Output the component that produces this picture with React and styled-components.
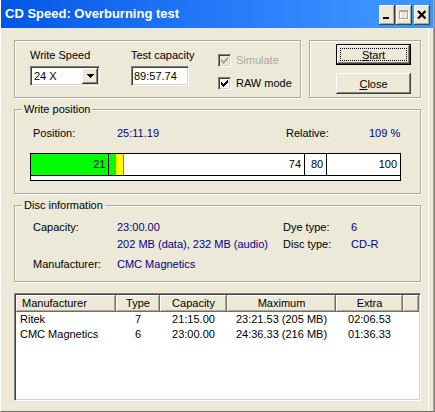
import React from 'react';
import styled, { createGlobalStyle, css } from 'styled-components';

const Global = createGlobalStyle`
  html, body { margin: 0; padding: 0; background: #ECE9D8; }
  body { font-family: "Liberation Sans", Arial, sans-serif; font-size: 11px; }
  *, *::before, *::after { box-sizing: border-box; }
`;

const Window = styled.div`
  width: 435px;
  height: 412px;
  background: #ECE9D8;
  border-left: 1px solid #fff;
  border-right: 1px solid #8a887e;
  border-bottom: 1px solid #716F64;
  box-shadow: inset -1px 0 0 #ACA899, inset -5px 0 0 #ECE9D8, inset -6px 0 0 #fff;
  display: flex;
  flex-direction: column;
  overflow: hidden;
  font-family: "Liberation Sans", Arial, sans-serif;
  font-size: 11px;
  color: #000;
`;

const TitleBar = styled.div`
  height: 28px;
  flex: none;
  display: flex;
  align-items: flex-start;
  margin-right: 1px;
  padding: 0 3px 0 4px;
  background: linear-gradient(to right, #0055E5 0%, #1569F0 25%, #2A80FB 60%, #3A92FF 85%, #3D96FF 100%);
`;

const TitleText = styled.div`
  flex: 1;
  color: #fff;
  font-weight: bold;
  font-size: 13px;
  line-height: 28px;
  white-space: nowrap;
`;

const CaptionButtons = styled.div`
  display: flex;
  margin-top: 5px;
`;

const CaptionButton = styled.div`
  width: 16px;
  height: 20px;
  margin-left: ${p => p.$gap || 0}px;
  background: #ECE9D8;
  box-shadow: inset -1px -1px #404040, inset 1px 1px #fff, inset -2px -2px #ACA899;
  display: flex;
  align-items: center;
  justify-content: center;
`;

const Body = styled.div`
  flex: 1;
  display: flex;
  flex-direction: column;
  padding: 12px 13px 0 13px;
`;

const TopRow = styled.div`
  display: flex;
  gap: 8px;
  height: 58px;
  flex: none;
`;

const Group = styled.div`
  position: relative;
  flex: none;
  height: ${p => p.$height}px;
  ${p => (p.$width ? `width: ${p.$width}px;` : '')}
  border: 1px solid #ACA899;
  box-shadow: 1px 1px 0 #fff, inset 1px 1px 0 #fff;
  margin-top: ${p => p.$mt || 0}px;
`;

const GroupTitle = styled.span`
  position: absolute;
  top: -7px;
  left: 7px;
  padding: 0 2px;
  line-height: 13px;
  background: #ECE9D8;
`;

const SettingsBox = styled(Group)`
  display: flex;
  padding: 8px 0 0 15px;
`;

const FieldColumn = styled.div`
  width: ${p => p.$width}px;
  display: flex;
  flex-direction: column;
  gap: 4px;
`;

const Label = styled.div`
  line-height: 13px;
  white-space: nowrap;
  color: ${p => (p.$disabled ? '#ACA899' : '#000')};
`;

const sunken = css`
  border: 1px solid;
  border-color: #808080 #fff #fff #808080;
  box-shadow: inset 1px 1px #404040, inset -1px -1px #D4D0C8;
`;

const Combo = styled.div`
  ${sunken};
  width: 70px;
  height: 20px;
  background: #fff;
  display: flex;
  align-items: center;
  padding: 1px 1px 1px 3px;
`;

const ComboText = styled.span`
  flex: 1;
  line-height: 16px;
`;

const DropButton = styled.div`
  width: 16px;
  height: 16px;
  background: #ECE9D8;
  box-shadow: inset -1px -1px #404040, inset 1px 1px #fff, inset -2px -2px #808080, inset 2px 2px #ECE9D8;
  display: flex;
  align-items: center;
  justify-content: center;
`;

const TextBox = styled.div`
  ${sunken};
  width: 58px;
  height: 20px;
  background: #fff;
  padding: 1px 2px;
  line-height: 16px;
`;

const CheckColumn = styled.div`
  display: flex;
  flex-direction: column;
  gap: 10px;
  margin-top: 5px;
`;

const CheckRow = styled.div`
  display: flex;
  align-items: center;
  gap: 5px;
`;

const CheckBox = styled.span`
  ${sunken};
  width: 13px;
  height: 13px;
  flex: none;
  background: ${p => (p.$disabled ? '#ECE9D8' : '#fff')};
  display: flex;
  align-items: center;
  justify-content: center;
`;

const ButtonBox = styled(Group)`
  display: flex;
  flex-direction: column;
  align-items: flex-end;
  gap: 8px;
  padding: 3px 9px 0 0;
`;

const PushButton = styled.button`
  position: relative;
  width: 75px;
  height: 21px;
  margin: 0;
  padding: 0;
  border: none;
  font: inherit;
  color: #000;
  background: #ECE9D8;
  box-shadow: inset -1px -1px #404040, inset 1px 1px #fff, inset -2px -2px #808080;
  ${p =>
    p.$default &&
    css`
      box-shadow: inset 0 0 0 1px #000, inset -2px -2px #404040, inset 2px 2px #fff, inset -3px -3px #808080;
      &::after {
        content: '';
        position: absolute;
        top: 4px;
        left: 4px;
        right: 4px;
        bottom: 4px;
        border: 1px dotted #000;
      }
    `}
`;

const InfoRow = styled.div`
  display: grid;
  grid-template-columns: 84px 169px 83px 1fr;
  margin-left: 3px;
  line-height: 13px;
`;

const Value = styled.span`
  color: #000088;
  white-space: nowrap;
`;

const WriteBox = styled(Group)`
  padding: 17px 0 0 15px;
`;

const Bar = styled.div`
  margin-top: 13px;
  width: 371px;
  height: 28px;
  border: 1px solid #000;
  display: flex;
  flex-direction: column;
`;

const Track = styled.div`
  position: relative;
  height: 22px;
  flex: none;
  background: #fff;
  border-bottom: 1px solid #000;
  overflow: hidden;
`;

const Strip = styled.div`
  flex: 1;
  background: #fff;
`;

const Fill = styled.div`
  position: absolute;
  top: 0;
  bottom: 0;
  background: ${p => p.$color};
  ${p => (p.$edge ? 'border-right: 1px solid #808080;' : '')}
`;

const Marker = styled.div`
  position: absolute;
  top: 0;
  bottom: 0;
  left: 0;
  box-sizing: content-box;
  ${p => (p.$line ? 'border-right: 1px solid #000;' : '')}
  text-align: right;
  padding-right: 3px;
  line-height: 21px;
  white-space: nowrap;
`;

const DiscBox = styled(Group)`
  padding: 15px 0 0 18px;
`;

const DiscGrid = styled.div`
  display: grid;
  grid-template-columns: 84px 166px 68px auto;
  grid-template-rows: 17px 20px 13px;
  line-height: 13px;
`;

const ListView = styled.div`
  ${sunken};
  margin-top: 11px;
  height: 108px;
  flex: none;
  background: #fff;
  padding: 1px;
`;

const listColumns = '100px 44px 67px 109px 67px 1fr';

const HeaderRow = styled.div`
  display: grid;
  grid-template-columns: ${listColumns};
  height: 17px;
`;

const HeaderCell = styled.div`
  background: #ECE9D8;
  box-shadow: inset -1px -1px #716F64, inset 1px 1px #fff, inset -2px -2px #ACA899;
  line-height: 16px;
  text-align: ${p => p.$align || 'center'};
  padding-left: ${p => (p.$align === 'left' ? 6 : 0)}px;
  white-space: nowrap;
`;

const DataRow = styled.div`
  display: grid;
  grid-template-columns: ${listColumns};
  height: 15px;
  line-height: 15px;
`;

const DataCell = styled.div`
  text-align: ${p => p.$align || 'center'};
  padding-left: ${p => (p.$align === 'left' ? 4 : 0)}px;
  white-space: nowrap;
`;

const CheckMark = ({ color }) => (
  <svg width="7" height="7" viewBox="0 0 7 7" shapeRendering="crispEdges">
    <g fill={color}>
      <rect x="6" y="0" width="1" height="1" />
      <rect x="5" y="1" width="2" height="1" />
      <rect x="0" y="2" width="1" height="1" />
      <rect x="4" y="2" width="3" height="1" />
      <rect x="0" y="3" width="2" height="1" />
      <rect x="3" y="3" width="3" height="1" />
      <rect x="0" y="4" width="5" height="1" />
      <rect x="1" y="5" width="3" height="1" />
      <rect x="2" y="6" width="1" height="1" />
    </g>
  </svg>
);

const markers = [21, 74, 80, 100];
const fills = [
  { from: 0, to: 23, color: '#00FF00' },
  { from: 23, to: 25.19, color: '#FFFF00', edge: true },
];

const rows = [
  { name: 'Ritek', type: '7', cap: '21:15.00', max: '23:21.53 (205 MB)', extra: '02:06.53' },
  { name: 'CMC Magnetics', type: '6', cap: '23:00.00', max: '24:36.33 (216 MB)', extra: '01:36.33' },
];

export default function App() {
  return (
    <>
      <Global />
      <Window>
        <TitleBar>
          <TitleText>CD Speed: Overburning test</TitleText>
          <CaptionButtons>
            <CaptionButton>
              <svg width="16" height="20" viewBox="0 0 16 20" shapeRendering="crispEdges">
                <rect x="4" y="12" width="6" height="2" fill="#000" />
              </svg>
            </CaptionButton>
            <CaptionButton $gap={1}>
              <svg width="16" height="20" viewBox="0 0 16 20" shapeRendering="crispEdges">
                <g fill="none" stroke="#fff">
                  <rect x="4.5" y="6.5" width="8" height="8" />
                </g>
                <g fill="none" stroke="#ACA899">
                  <rect x="3.5" y="5.5" width="8" height="8" />
                  <line x1="3" y1="6.5" x2="12" y2="6.5" />
                </g>
              </svg>
            </CaptionButton>
            <CaptionButton $gap={2}>
              <svg width="16" height="20" viewBox="0 0 16 20">
                <path d="M4 6 L11.5 13.5 M11.5 6 L4 13.5" stroke="#000" strokeWidth="2.2" fill="none" />
              </svg>
            </CaptionButton>
          </CaptionButtons>
        </TitleBar>

        <Body>
          <TopRow>
            <SettingsBox $width={287} $height={58}>
              <FieldColumn $width={101}>
                <Label>Write Speed</Label>
                <Combo>
                  <ComboText>24 X</ComboText>
                  <DropButton>
                    <svg width="7" height="4" viewBox="0 0 7 4" shapeRendering="crispEdges">
                      <path d="M0 0 H7 L3.5 4 Z" fill="#000" />
                    </svg>
                  </DropButton>
                </Combo>
              </FieldColumn>
              <FieldColumn $width={87}>
                <Label>Test capacity</Label>
                <TextBox>89:57.74</TextBox>
              </FieldColumn>
              <CheckColumn>
                <CheckRow>
                  <CheckBox $disabled>
                    <CheckMark color="#ACA899" />
                  </CheckBox>
                  <Label $disabled>Simulate</Label>
                </CheckRow>
                <CheckRow>
                  <CheckBox>
                    <CheckMark color="#000" />
                  </CheckBox>
                  <Label>RAW mode</Label>
                </CheckRow>
              </CheckColumn>
            </SettingsBox>
            <ButtonBox $width={112} $height={58}>
              <PushButton $default>
                <u>S</u>tart
              </PushButton>
              <PushButton>
                <u>C</u>lose
              </PushButton>
            </ButtonBox>
          </TopRow>

          <WriteBox $height={85} $mt={11}>
            <GroupTitle>Write position</GroupTitle>
            <InfoRow>
              <span>Position:</span>
              <Value>25:11.19</Value>
              <span>Relative:</span>
              <Value>109 %</Value>
            </InfoRow>
            <Bar>
              <Track>
                {fills.map(f => (
                  <Fill
                    key={f.from}
                    $color={f.color}
                    $edge={f.edge}
                    style={{ left: `${f.from}%`, width: `${f.to - f.from}%` }}
                  />
                ))}
                {markers.map(m => (
                  <Marker key={m} $line={m < 100} style={{ width: `calc(${m}% - 3px)` }}>
                    {m}
                  </Marker>
                ))}
              </Track>
              <Strip />
            </Bar>
          </WriteBox>

          <DiscBox $height={77} $mt={11}>
            <GroupTitle>Disc information</GroupTitle>
            <DiscGrid>
              <span>Capacity:</span>
              <Value>23:00.00</Value>
              <span>Dye type:</span>
              <Value>6</Value>
              <span />
              <Value>202 MB (data), 232 MB (audio)</Value>
              <span>Disc type:</span>
              <Value>CD-R</Value>
              <span>Manufacturer:</span>
              <Value>CMC Magnetics</Value>
            </DiscGrid>
          </DiscBox>

          <ListView>
            <HeaderRow>
              <HeaderCell $align="left">Manufacturer</HeaderCell>
              <HeaderCell>Type</HeaderCell>
              <HeaderCell>Capacity</HeaderCell>
              <HeaderCell>Maximum</HeaderCell>
              <HeaderCell>Extra</HeaderCell>
              <HeaderCell />
            </HeaderRow>
            {rows.map(r => (
              <DataRow key={r.name}>
                <DataCell $align="left">{r.name}</DataCell>
                <DataCell>{r.type}</DataCell>
                <DataCell>{r.cap}</DataCell>
                <DataCell>{r.max}</DataCell>
                <DataCell>{r.extra}</DataCell>
                <DataCell />
              </DataRow>
            ))}
          </ListView>
        </Body>
      </Window>
    </>
  );
}
